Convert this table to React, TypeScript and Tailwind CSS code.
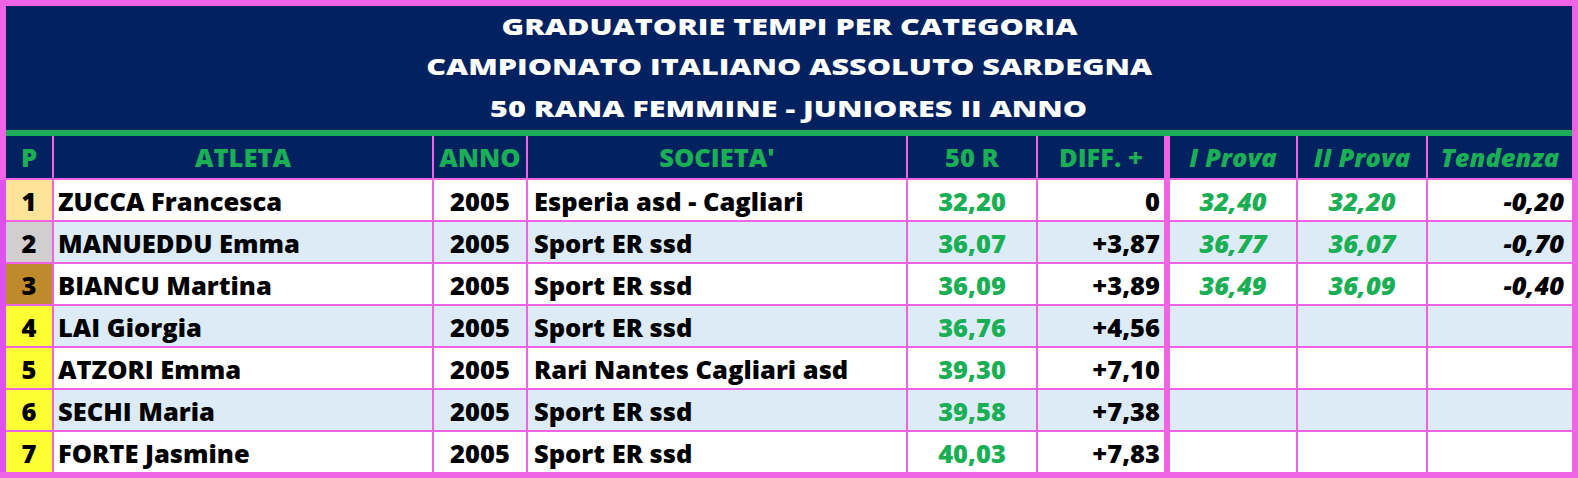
import React from 'react';

const COLS = 'grid-cols-[46px_378px_92px_378px_128px_126px_2px_126px_128px_144px]';

type Row = {
  pos: number;
  name: string;
  year: string;
  club: string;
  time: string;
  diff: string;
  first?: string;
  second?: string;
  trend?: string;
};

const rows: Row[] = [
  { pos: 1, name: 'ZUCCA Francesca', year: '2005', club: 'Esperia asd - Cagliari', time: '32,20', diff: '0', first: '32,40', second: '32,20', trend: '-0,20' },
  { pos: 2, name: 'MANUEDDU Emma', year: '2005', club: 'Sport ER ssd', time: '36,07', diff: '+3,87', first: '36,77', second: '36,07', trend: '-0,70' },
  { pos: 3, name: 'BIANCU Martina', year: '2005', club: 'Sport ER ssd', time: '36,09', diff: '+3,89', first: '36,49', second: '36,09', trend: '-0,40' },
  { pos: 4, name: 'LAI Giorgia', year: '2005', club: 'Sport ER ssd', time: '36,76', diff: '+4,56' },
  { pos: 5, name: 'ATZORI Emma', year: '2005', club: 'Rari Nantes Cagliari asd', time: '39,30', diff: '+7,10' },
  { pos: 6, name: 'SECHI Maria', year: '2005', club: 'Sport ER ssd', time: '39,58', diff: '+7,38' },
  { pos: 7, name: 'FORTE Jasmine', year: '2005', club: 'Sport ER ssd', time: '40,03', diff: '+7,83' },
];

const POS_BG: Record<number, string> = {
  1: 'bg-[#fde499]',
  2: 'bg-[#d0cece]',
  3: 'bg-[#bf8a2b]',
};

export default function App() {
  return (
    <div
      className="w-[1578px] h-[478px] bg-[#ee64e4] pt-[6px] pr-[6px] pb-[6px] flex flex-col font-extrabold text-[25.5px]"
      style={{ fontFamily: '"Open Sans", Lato, sans-serif' }}
    >
      {/* titolo */}
      <div className="border-l-[6px] border-[#ee64e4] bg-[#022160]">
        <div className="h-[124px] flex flex-col items-center text-white text-[23.5px]">
          <div className="h-[40px] leading-[40px] scale-x-[1.3]">GRADUATORIE TEMPI PER CATEGORIA</div>
          <div className="h-[40px] leading-[40px] scale-x-[1.3]">CAMPIONATO ITALIANO ASSOLUTO SARDEGNA</div>
          <div className="h-[44px] leading-[44px] scale-x-[1.3]">50 RANA FEMMINE - JUNIORES II ANNO</div>
        </div>
        <div className="h-[6px] bg-[#1aae58]" />
      </div>

      {/* intestazione */}
      <div className={`grid ${COLS} gap-x-[2px] border-l-[6px] border-[#ee64e4] h-[42px] text-[#1aae55] leading-[42px] text-center`}>
        <div className="bg-[#022160]">P</div>
        <div className="bg-[#022160]">ATLETA</div>
        <div className="bg-[#022160]">ANNO</div>
        <div className="bg-[#022160]">SOCIETA'</div>
        <div className="bg-[#022160]">50 R</div>
        <div className="bg-[#022160]">DIFF. +</div>
        <div />
        <div className="bg-[#022160] italic">I Prova</div>
        <div className="bg-[#022160] italic">II Prova</div>
        <div className="bg-[#022160] italic">Tendenza</div>
      </div>

      {/* righe */}
      <div className={`mt-[2px] grid ${COLS} gap-[2px] auto-rows-[40px] border-l-[6px] border-[#e04fef] leading-[38px] text-black`}>
        {rows.map((r, i) => {
          const bg = i % 2 === 1 ? 'bg-[#ddebf7]' : 'bg-white';
          return (
            <React.Fragment key={r.pos}>
              <div className={`${POS_BG[r.pos] ?? 'bg-[#ffff33]'} pt-[2px] text-center`}>{r.pos}</div>
              <div className={`${bg} pt-[2px] pl-[4px]`}>{r.name}</div>
              <div className={`${bg} pt-[2px] text-center`}>{r.year}</div>
              <div className={`${bg} pt-[2px] pl-[6px]`}>{r.club}</div>
              <div className={`${bg} pt-[2px] text-center text-[#1aae55]`}>{r.time}</div>
              <div className={`${bg} pt-[2px] text-right pr-[4px]`}>{r.diff}</div>
              <div />
              <div className={`${bg} pt-[2px] text-center italic text-[#1aae55]`}>{r.first}</div>
              <div className={`${bg} pt-[2px] text-center italic text-[#1aae55]`}>{r.second}</div>
              <div className={`${bg} pt-[2px] text-right italic pr-[8px]`}>{r.trend}</div>
            </React.Fragment>
          );
        })}
      </div>
    </div>
  );
}
